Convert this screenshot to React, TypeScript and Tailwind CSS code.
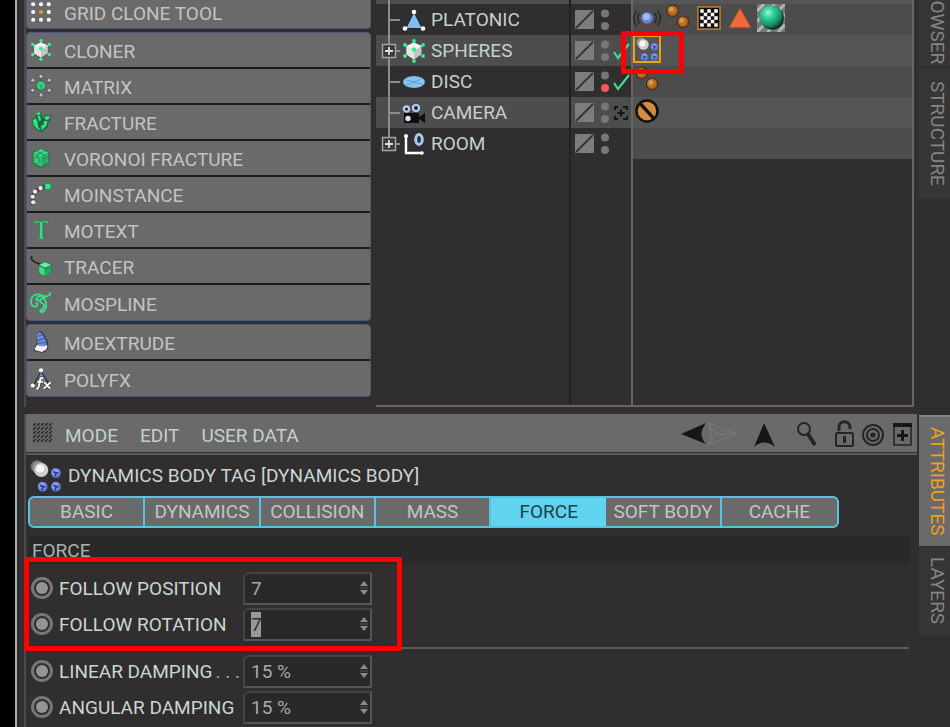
import React from "react";

type Kind = string;

function Glyph({ kind, size = 22 }: { kind: Kind; size?: number }) {
  return (
    <svg width={size} height={size} viewBox="0 0 24 24" className="shrink-0" aria-hidden="true">
      {drawings[kind]}
    </svg>
  );
}

const G = "#35d07f";
const hexPoints = [[12, 2], [21, 6], [21, 17], [12, 22], [3, 17], [3, 6]];

const cloner = (
  <>
    <path d="M12 2.500l8 4v10l-8 5-8-5V7z" fill="#4a4a4a" />
    <path d="M12 3.500l7.500 3.500v8.500L12 20.500l-7.500-5V7z" fill="#c4c4c4" />
    <path d="M12 3.500L19.500 7 12 12 4.500 7z" fill="#f4f4f4" />
    <path d="M4.500 7l7.500 5v8.500l-7.500-5z" fill="#e6e6e6" />
    {hexPoints.map(([x, y]) => (
      <circle key={`${x}-${y}`} cx={x} cy={y} r="1.900" fill="#39ef8d" />
    ))}
    <circle cx="12" cy="10.500" r="2.300" fill="#39ef8d" />
  </>
);

const balls = (
  <>
    {[[7.5, 6], [16.5, 15.500]].map(([x, y]) => (
      <g key={x}>
        <circle cx={x} cy={y} r="5.300" fill="#2b1a0c" />
        <circle cx={x} cy={y} r="4.700" fill="#8f541b" />
        <circle cx={x - 0.5} cy={y - 0.6} r="3.900" fill="#b97129" />
        <circle cx={x - 1.2} cy={y - 1.4} r="1.900" fill="#dd9c58" />
      </g>
    ))}
  </>
);

const blueDot = (x: number, y: number) => (
  <g key={`${x}-${y}`}>
    <circle cx={x} cy={y} r="3.700" fill="#5b76cf" />
    <circle cx={x - 0.4} cy={y - 0.6} r="2.800" fill="#829bef" />
    <path d={`M${x - 2} ${y - 1.2}l2 1.200h2M${x} ${y}l-.6 2.500`} stroke="#2b3a77" strokeWidth="1.200" fill="none" />
  </g>
);

const dynamics = (
  <>
    <circle cx="5" cy="4.600" r="4.500" fill="#6c6c6c" />
    <circle cx="6.500" cy="5.800" r="4.800" fill="#939393" />
    <circle cx="8.500" cy="7.500" r="5.200" fill="#cfcfcf" />
    <circle cx="7.600" cy="6.400" r="3" fill="#f6f6f6" />
    {blueDot(19.500, 9.800)}
    {blueDot(9.500, 20)}
    {blueDot(19.500, 20)}
  </>
);

const drawings: Record<Kind, React.ReactNode> = {
  grid: (
    <>
      {[3.500, 12, 20.500].map((y) =>
        [3.500, 12, 20.500].map((x) => (
          <circle key={`${x}-${y}`} cx={x} cy={y} r="2.200" fill={x === 12 && y === 12 ? "#f59324" : "#fff"} />
        ))
      )}
    </>
  ),
  cloner,
  matrix: (
    <>
      {hexPoints.map(([x, y]) => (
        <g key={`${x}-${y}`}>
          <circle cx={x} cy={y} r="2.700" fill="#484848" />
          <circle cx={x} cy={y - 0.3} r="1.900" fill="#bbb" />
        </g>
      ))}
      <circle cx="12" cy="11.500" r="5.500" fill="#2b5a40" />
      <circle cx="12" cy="11.500" r="4.700" fill={G} />
      <path d="M10 10.500l2 1.500 2-1.500M12 12v3" stroke="#1f9356" fill="none" />
    </>
  ),
  fracture: (
    <>
      <path d="M2 9l4-2 0-4 5-2 2 2v3l3 0 1-2 5 1 1 4-3 4-1 5-6 5-6-2-4-5z" fill="#1b6b41" />
      <path d="M6 3l4-2 2 2-3 2zM3 10l3-2 2 3 1 7 3 3-4-1-4-5zM8 6l3-1 1 5-2 1zM15 7l5-2 2 3-4 2zM15 11l4 0-1 5-5 5-1-5 3-1z" fill="#3bdc87" />
    </>
  ),
  voronoi: (
    <>
      <path d="M12 1l9 4v13l-9 5-9-5V5z" fill="#1d7446" />
      <path d="M12 2l8 4-8 5-8-5z" fill="#3fdb89" />
      <path d="M4 6l8 5v10.500L4 17z" fill="#37c97b" />
      <path d="M12 11l8-5v11l-8 4.500z" fill="#2cb06c" />
      <path d="M7 4l5 3 4-3M4 12l5-1 2 5-4 3M20 11l-5 2 1 6M9 11l-2-3 5-1 4 2-1 4" stroke="#1d8a52" fill="none" />
    </>
  ),
  instance: (
    <>
      <path d="M3 22v-6l2-6 5-4 9-3" stroke="#4a4a4a" strokeWidth="4.500" fill="none" strokeLinecap="round" />
      {[[3.500, 21], [3, 15], [5.500, 9.500], [11.500, 5.500]].map(([x, y]) => (
        <circle key={y} cx={x} cy={y} r="2.300" fill="#eee" />
      ))}
      <circle cx="19.500" cy="4" r="4" fill="#20834f" />
      <circle cx="19.500" cy="3.700" r="3.200" fill="#38dd86" />
    </>
  ),
  motext: (
    <path
      d="M4 6c0-3 1.500-4.500 4-4 3 .8 6 .8 9-.2 2-.3 3 1 3 4-1.500-1.500-3-2-6-1.700V20l2.500 2h-8l2-2V4.300C8 4 6 4.500 4 6z"
      fill="#38e085"
      stroke="#2b6a48"
      strokeWidth=".6"
    />
  ),
  tracer: (
    <>
      <path d="M2 1c-2 5 2 6 9 9" stroke="#292929" strokeWidth="2" fill="none" />
      <path d="M9.500 10.500l7-3 7 3v9l-7 4-7-4z" fill="#1d7044" />
      <path d="M10 11l6.500-3L23 11l-6.500 3z" fill="#62f0a5" />
      <path d="M10 12l6 3v8l-6-3.500z" fill="#3ddd88" />
      <path d="M16.500 15l6.500-3v7.500L16.500 23z" fill="#25a765" />
    </>
  ),
  mospline: (
    <path
      d="M5 16C-1 14 0 5 6 3c6-2 10 4 14 1 M20 4c2-1 3-2 1.500-3 M8 6c4-3 8-1 9 4 2 6-1 12-4 12-3-1-1-4 0-2 M14 7c-4 1-4 4-1 5 3 1 3 4 1 6 M8 6c-2 1-1 4 1 3 M5 16c3 0 4-3 2-4"
      stroke="#38e085"
      strokeWidth="2"
      fill="none"
      strokeLinecap="round"
    />
  ),
  moextrude: (
    <>
      <path d="M4 19l3-5V3l3-3 4 1 5 9 1 6 0 4-6 4-9-2z" fill="#3e4150" />
      <path d="M5 19l3-4 8-1 3 2-1 4-5 3-7-2z" fill="#f1f1f1" />
      <path d="M7 4l3-3 3 2 4 7 1 6-4 1-5-1-1-6z" fill="#6f8dd9" />
      <path d="M8 6l5-2M8.500 10.500l7-2.500M9 14l8-2" stroke="#4660ad" strokeWidth="1.200" />
    </>
  ),
  polyfx: (
    <>
      <path d="M12 4L4 19M12 4l8 12" stroke="#333" strokeWidth="1.500" />
      <path d="M12 5l4.500 8-9 3z" fill="#6f8dd9" />
      <circle cx="12" cy="2.500" r="2.300" fill="#fff" />
      <circle cx="3" cy="19" r="2.200" fill="#fff" />
      <path d="M14 11c-3-1-3 2-4 7-.5 3-1 5-3 5M8 15h6M15.500 15.500l6.500 7M22.500 15.500l-7.500 7" stroke="#3a3a3a" strokeWidth="3.800" fill="none" />
      <path d="M14 11c-3-1-3 2-4 7-.5 3-1 5-3 5M8 15h6M15.500 15.500l6.500 7M22.500 15.500l-7.500 7" stroke="#fff" strokeWidth="2.100" fill="none" />
    </>
  ),
  platonic: (
    <>
      <path d="M12 4L3 21h18z" fill="#222" />
      <path d="M12 5l7.500 15h-15z" fill="#7fbdf3" />
      <circle cx="12" cy="4" r="2.300" fill="#fff" />
      <circle cx="3" cy="20.500" r="2.300" fill="#fff" />
      <circle cx="21" cy="20.500" r="2.300" fill="#fff" />
    </>
  ),
  disc: (
    <>
      <ellipse cx="12" cy="12" rx="11" ry="6" fill="#84c2f2" />
      <path d="M4 10l16 4M5 15l14-6" stroke="#5d9ac8" strokeWidth=".8" />
    </>
  ),
  camera: (
    <>
      <path d="M2 12h15v10H2zM17 16l6-4v10l-6-4z" fill="#0f0f0f" />
      <circle cx="4.500" cy="8" r="2.600" stroke="#b4cdf7" strokeWidth="2.200" fill="#222" />
      <circle cx="14" cy="7" r="3" stroke="#b4cdf7" strokeWidth="2.200" fill="#222" />
      <circle cx="6" cy="17.500" r="2.700" fill="#d2e1fc" />
    </>
  ),
  room: (
    <>
      <path d="M4 4v17h16" stroke="#fff" strokeWidth="2.400" fill="none" />
      <circle cx="4" cy="4" r="2" fill="#fff" />
      <circle cx="20" cy="21" r="1.800" fill="#fff" />
      <ellipse cx="17" cy="7.500" rx="3.300" ry="5" stroke="#a6c8fb" strokeWidth="3" fill="none" />
    </>
  ),
  balls,
  dynamics,
  signal: (
    <>
      <circle cx="12" cy="12" r="5" fill="#6983d6" />
      <circle cx="11.500" cy="11" r="3" fill="#a7b9f5" />
      <path d="M5.500 7.500c-2 3-2 6 0 9M3 5.500c-3 4-3 9 0 13M18.500 7.500c2 3 2 6 0 9M21 5.500c3 4 3 9 0 13" stroke="#272727" strokeWidth="1.200" fill="none" />
    </>
  ),
  checker: (
    <>
      <rect x="2.500" y="2.500" width="19" height="19" fill="#111" stroke="#b5732f" strokeWidth="1.500" />
      {[0, 1, 2, 3, 4].map((r) =>
        [0, 1, 2, 3, 4].map((c) =>
          (r + c) % 2 === 0 ? <rect key={`${r}${c}`} x={4.500 + c * 3} y={4.500 + r * 3} width="3" height="3" fill="#fff" /> : null
        )
      )}
    </>
  ),
  triangle: <path d="M12 4l9 16H3z" fill="#f0693a" stroke="#d3542a" strokeWidth=".7" />,
  material: (
    <>
      <defs>
        <radialGradient id="green-ball" cx=".38" cy=".32" r=".7">
          <stop offset="0" stopColor="#9cf9d8" />
          <stop offset=".3" stopColor="#3ad39f" />
          <stop offset=".75" stopColor="#189468" />
          <stop offset="1" stopColor="#0b4f38" />
        </radialGradient>
      </defs>
      <rect width="24" height="24" fill="#777" />
      <path d="M0 6l6-6M0 15L15 0M0 24L24 0M9 24L24 9M18 24l6-6" stroke="#b5b5b5" strokeWidth="2.500" />
      <circle cx="13" cy="12" r="10" fill="#14251f" />
      <circle cx="12" cy="11" r="10" fill="url(#green-ball)" />
    </>
  ),
  forbid: (
    <>
      <circle cx="12" cy="12" r="9" fill="#d98b3c" stroke="#121212" strokeWidth="2.200" />
      <path d="M6 5.500l12 13" stroke="#121212" strokeWidth="3" />
    </>
  ),
};

function MenuGroup({ items, cut = false }: { items: [Kind, string][]; cut?: boolean }) {
  return (
    <div
      className={
        cut
          ? "overflow-hidden rounded-b border border-t-0 border-[#4b5878] bg-[#6a6a6a]"
          : "overflow-hidden rounded border border-[#4b5878] bg-[#6a6a6a]"
      }
    >
      {items.map(([icon, label]) => (
        <button
          key={label}
          type="button"
          className={
            cut
              ? "flex h-7 w-full items-center gap-3 pb-1 pl-[3px] text-left"
              : "flex h-9 w-full items-center gap-3 border-b-2 border-[#1c1c1c] pl-[3px] text-left last:h-[35px] last:border-b-0"
          }
        >
          <Glyph kind={icon} />
          <span className="pt-1 text-[#c3c3c3]">{label}</span>
        </button>
      ))}
    </div>
  );
}

type Obj = {
  name: string;
  icon: Kind;
  expand?: boolean;
  last?: boolean;
  red?: boolean;
  mark?: "check" | "target";
  tags: Kind[];
};

const objects: Obj[] = [
  { name: "PLATONIC", icon: "platonic", tags: ["signal", "balls", "checker", "triangle", "material"] },
  { name: "SPHERES", icon: "cloner", expand: true, mark: "check", tags: ["dynamics"] },
  { name: "DISC", icon: "disc", red: true, mark: "check", tags: ["balls"] },
  { name: "CAMERA", icon: "camera", mark: "target", tags: ["forbid"] },
  { name: "ROOM", icon: "room", expand: true, last: true, tags: [] },
];

function TreeLine({ expand, last }: { expand?: boolean; last?: boolean }) {
  return (
    <svg width="26" height="31" viewBox="0 0 26 31" className="shrink-0" aria-hidden="true">
      <path d={last ? "M13 0V15" : "M13 0V31"} stroke="#8d8d8d" strokeWidth="2" />
      <path d="M13 16H24" stroke="#8d8d8d" strokeWidth="2" />
      {expand && (
        <>
          <rect x="6.500" y="9.500" width="13" height="13" fill="#3a3a3a" stroke="#a5a5a5" strokeWidth="1.500" />
          <path d="M9 16h8M13 12v8" stroke="#d5e0dc" strokeWidth="1.800" />
        </>
      )}
    </svg>
  );
}

function StateCell({ o }: { o: Obj }) {
  return (
    <svg width="59" height="31" viewBox="0 0 59 31" aria-hidden="true">
      <rect x="4" y="6" width="19" height="19" rx="1" fill="#7d7d7d" />
      <path d="M5 24L22 7" stroke="#333" strokeWidth="1.800" />
      <circle cx="34" cy="9.500" r="4" fill="#777" />
      <circle cx="34" cy="22" r="4" fill={o.red ? "#f05a5a" : "#777"} />
      {o.mark === "check" && <path d="M43 17l4 6L58 9" stroke="#3fe08c" strokeWidth="2.200" fill="none" />}
      {o.mark === "target" && (
        <path d="M44 13v-3h3M52 10h4v3M56 19v3h-4M47 22h-3v-3M50 12.500v7M46.500 16h7" stroke="#161616" strokeWidth="2" fill="none" />
      )}
    </svg>
  );
}

function ObjectManager() {
  return (
    <section className="flex min-w-0 flex-1 border-b-2 border-[#666]">
      <div className="w-[193px] shrink-0">
        <div className="h-1 bg-[#4d4d4d]">
          <svg width="26" height="4" aria-hidden="true"><path d="M13 0v4" stroke="#8d8d8d" strokeWidth="2" /></svg>
        </div>
        {objects.map((o) => (
          <div key={o.name} className="flex h-[31px] items-center even:bg-[#302e2f] odd:bg-[#4d4d4d]">
            <TreeLine expand={o.expand} last={o.last} />
            <Glyph kind={o.icon} size={24} />
            <span className="ml-[5px] text-[#c3d0cc]">{o.name}</span>
          </div>
        ))}
      </div>
      <div className="w-[62px] shrink-0 border-l-2 border-[#222]">
        <div className="h-1 bg-[#4d4d4d]" />
        {objects.map((o) => (
          <div key={o.name} className="h-[31px] even:bg-[#302e2f] odd:bg-[#4d4d4d]">
            <StateCell o={o} />
          </div>
        ))}
      </div>
      <div className="min-w-0 flex-1 border-x-2 border-[#666]">
        <div className="h-1 bg-[#555]" />
        {objects.map((o) => (
          <div key={o.name} className="flex h-[31px] items-center pb-[3px] even:bg-[#4c4c4c] odd:bg-[#555]">
            {o.tags.map((t) =>
              t === "dynamics" ? (
                <div key={t} className="relative flex w-[31px] items-center">
                  <div className="border-2 border-[#e8a020]">
                    <Glyph kind={t} size={24} />
                  </div>
                  <div className="absolute -top-1 -left-3 h-[43px] w-[63px] rounded-xs border-5 border-[#ff0000]" />
                </div>
              ) : (
                <div key={t} className="flex w-[31px] items-center">
                  <Glyph kind={t} size={28} />
                </div>
              )
            )}
          </div>
        ))}
      </div>
    </section>
  );
}

function SideTab({ label, className }: { label: string; className: string }) {
  return (
    <button type="button" className={`flex w-full shrink-0 items-center pl-[6px] ${className}`}>
      <span className="text-center leading-6 [writing-mode:vertical-rl]">{label}</span>
    </button>
  );
}

function HeaderTools() {
  return (
    <svg width="236" height="38" viewBox="0 0 236 38" aria-label="Panel tools" role="img">
      <path d="M0 20L25 9c-6 8-6 14 0 21z" fill="#171717" />
      <path d="M27 9l28 11-28 11c4-8 4-14 0-22zM27 9l8 11-8 11M35 20l20 0" stroke="#7a7a7a" strokeWidth="1" fill="none" />
      <path d="M83 9l11 24c-7-6-14-6-21 0z" fill="#171717" />
      <circle cx="123" cy="15" r="6" stroke="#252525" strokeWidth="2" fill="none" />
      <path d="M127 20l7 11" stroke="#252525" strokeWidth="4" />
      <rect x="155" y="19" width="17" height="13" rx="1.500" stroke="#252525" strokeWidth="2" fill="none" />
      <path d="M158 17v-4c0-7 11-7 11 0v2" stroke="#252525" strokeWidth="3" fill="none" />
      <path d="M163.500 22v7" stroke="#252525" strokeWidth="3" />
      <circle cx="192" cy="21" r="10" stroke="#252525" strokeWidth="2" fill="none" />
      <circle cx="192" cy="21" r="6" stroke="#252525" strokeWidth="2" fill="none" />
      <circle cx="192" cy="21" r="2.600" fill="#252525" />
      <rect x="213" y="10" width="17" height="21" stroke="#252525" strokeWidth="1.500" fill="none" />
      <path d="M212 11h19" stroke="#171717" strokeWidth="4" />
      <path d="M216 21.500h11M221.500 16v11" stroke="#171717" strokeWidth="3" />
    </svg>
  );
}

function Field({ id, label, value, dots, selected }: { id: string; label: string; value: string; dots?: boolean; selected?: boolean }) {
  return (
    <div className="flex h-9 items-center">
      <input
        type="radio"
        name={`${id}-key`}
        aria-label={`${label} keyframe`}
        className="mr-[6px] size-[22px] shrink-0 appearance-none rounded-full border-3 border-[#777] bg-[#949494] bg-clip-content p-[2px]"
      />
      <label htmlFor={id} className="flex w-[184px] shrink-0 pt-px whitespace-nowrap text-[#c9d6d1]">
        {label}
        {dots && <span className="pl-[3px] text-[#a5adaa]">. . .</span>}
      </label>
      <div className="flex h-[33px] w-[129px] items-center rounded-tl-md border-2 border-t-[#444] border-r-[#555] border-b-[#555] border-l-[#444] bg-[#292929]">
        <input
          id={id}
          type="text"
          defaultValue={value}
          className={
            selected
              ? "h-[25px] min-w-0 flex-1 bg-[linear-gradient(#999,#999)] bg-[length:10px_25px] bg-[position:6px_0] bg-no-repeat pl-[6px] text-[#333] outline-none"
              : "h-[25px] min-w-0 flex-1 bg-transparent pl-[6px] text-[#a9a9a9] outline-none"
          }
        />
        <svg width="12" height="16" viewBox="0 0 12 16" className="shrink-0" aria-hidden="true">
          <path d="M6 1l4 5H2zM6 15l4-5H2z" fill="#8a8a8a" />
          <path d="M2 8h8" stroke="#555" />
        </svg>
      </div>
    </div>
  );
}

const tabs = ["BASIC", "DYNAMICS", "COLLISION", "MASS", "FORCE", "SOFT BODY", "CACHE"];

function Attributes() {
  return (
    <section className="flex-1 border-l-2 border-[#4a4a4a]">
      <header className="flex h-[38px] items-center bg-[#6a6a6a] text-[#c3d0cc]">
        <svg width="20" height="20" viewBox="0 0 20 20" className="ml-[7px]" aria-hidden="true">
          {[0, 1, 2, 3, 4].map((r) =>
            [0, 1, 2, 3, 4].map((c) => (
              <path key={`${r}${c}`} d={`M${c * 4} ${r * 4 + 3}l3-3`} stroke="#262626" strokeWidth="1.400" />
            ))
          )}
        </svg>
        <nav className="flex flex-1 gap-[22px] pt-[5px] pl-3">
          <button type="button">MODE</button>
          <button type="button">EDIT</button>
          <button type="button">USER DATA</button>
        </nav>
        <HeaderTools />
      </header>
      <div className="h-[3px] border-t border-[#333] bg-[#5c5c5c]" />
      <div className="flex h-[41px] items-center gap-[6px] pl-1">
        <Glyph kind="dynamics" size={32} />
        <h1 className="pt-px text-[#c9d6d1]">DYNAMICS BODY TAG [DYNAMICS BODY]</h1>
      </div>
      <div className="mr-4 ml-[2px] grid h-8 max-w-[811px] grid-cols-7 overflow-hidden rounded-md border-2 border-[#57c3dc] bg-[#6a6a6a]" role="tablist">
        {tabs.map((t) => (
          <button
            key={t}
            type="button"
            role="tab"
            aria-selected={t === "FORCE"}
            className={
              t === "FORCE"
                ? "bg-[#5fd3f0] whitespace-nowrap text-[#223f48]"
                : "border-r-2 border-[#57c3dc] whitespace-nowrap text-[#c3c3c3] last:border-r-0"
            }
          >
            {t}
          </button>
        ))}
      </div>
      <h2 className="mt-2 mr-[7px] ml-[2px] h-7 bg-[#292929] pt-px pl-1 leading-7 text-[#a9b2af]">FORCE</h2>
      <div className="relative mr-2 border-b-2 border-[#5a5a5a] pt-[6px] pb-[5px] pl-[5px]">
        <Field id="follow-position" label="FOLLOW POSITION" value="7" />
        <Field id="follow-rotation" label="FOLLOW ROTATION" value="7" selected />
        <div className="pointer-events-none absolute -top-[7px] -left-[2px] h-[94px] w-[378px] rounded-xs border-5 border-[#ff0000]" />
      </div>
      <div className="pt-1 pl-[5px]">
        <Field id="linear-damping" label="LINEAR DAMPING" value="15 %" dots />
        <Field id="angular-damping" label="ANGULAR DAMPING" value="15 %" />
      </div>
    </section>
  );
}

export default function App() {
  return (
    <div className="flex min-h-screen overflow-hidden bg-[#302e2f] font-['Roboto','Liberation_Sans',sans-serif] text-[19px] leading-6 font-normal">
      <div className="w-[17px] shrink-0 border-r-2 border-[#a9adb0] bg-black" />
      <main className="ml-[7px] flex min-w-0 flex-1 flex-col">
        <div className="flex h-[407px] pr-[3px]">
          <aside className="mr-[5px] flex w-[347px] shrink-0 flex-col border-l-2 border-[#4a4a4a]">
            <div className="flex flex-col gap-[3px]">
              <MenuGroup cut items={[["grid", "GRID CLONE TOOL"]]} />
              <MenuGroup
                items={[
                  ["cloner", "CLONER"],
                  ["matrix", "MATRIX"],
                  ["fracture", "FRACTURE"],
                  ["voronoi", "VORONOI FRACTURE"],
                  ["instance", "MOINSTANCE"],
                  ["motext", "MOTEXT"],
                  ["tracer", "TRACER"],
                  ["mospline", "MOSPLINE"],
                ]}
              />
              <MenuGroup items={[["moextrude", "MOEXTRUDE"], ["polyfx", "POLYFX"]]} />
            </div>
          </aside>
          <ObjectManager />
        </div>
        <div className="mt-[7px] flex flex-1">
          <Attributes />
        </div>
      </main>
      <aside className="ml-[2px] flex w-[31px] shrink-0 flex-col text-[#858585]">
        <SideTab label="BROWSER" className="h-[66px] justify-start overflow-hidden bg-[#363636] [&>span]:flex [&>span]:h-[62px] [&>span]:justify-end" />
        <SideTab label="STRUCTURE" className="mt-[2px] h-[131px] bg-[#363636]" />
        <SideTab label="ATTRIBUTES" className="mt-[216px] h-[131px] border-t-2 border-[#858585] bg-[#6a6a6a] text-[#f0a020]" />
        <SideTab label="LAYERS" className="mt-px h-[88px] bg-[#353535]" />
      </aside>
    </div>
  );
}
